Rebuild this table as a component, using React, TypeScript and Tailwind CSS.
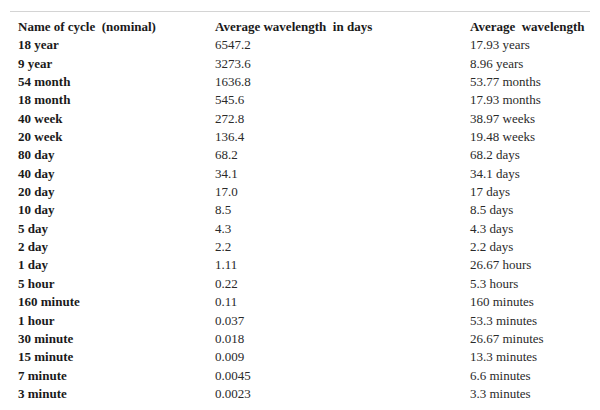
import React from 'react';

const rows: [string, string, string][] = [
  ['18 year', '6547.2', '17.93 years'],
  ['9 year', '3273.6', '8.96 years'],
  ['54 month', '1636.8', '53.77 months'],
  ['18 month', '545.6', '17.93 months'],
  ['40 week', '272.8', '38.97 weeks'],
  ['20 week', '136.4', '19.48 weeks'],
  ['80 day', '68.2', '68.2 days'],
  ['40 day', '34.1', '34.1 days'],
  ['20 day', '17.0', '17 days'],
  ['10 day', '8.5', '8.5 days'],
  ['5 day', '4.3', '4.3 days'],
  ['2 day', '2.2', '2.2 days'],
  ['1 day', '1.11', '26.67 hours'],
  ['5 hour', '0.22', '5.3 hours'],
  ['160 minute', '0.11', '160 minutes'],
  ['1 hour', '0.037', '53.3 minutes'],
  ['30 minute', '0.018', '26.67 minutes'],
  ['15 minute', '0.009', '13.3 minutes'],
  ['7 minute', '0.0045', '6.6 minutes'],
  ['3 minute', '0.0023', '3.3 minutes'],
];

export default function App() {
  return (
    <div className="w-[600px] h-[410px] bg-white overflow-hidden font-['Liberation_Serif',serif] text-[13px] text-[#2a2a2a]">
      <div className="pt-[11px] px-[10px]">
        <div className="border-t border-[#d4d4d4] pt-[6px] pl-[8px]">
          <div className="grid grid-cols-[197px_255px_1fr] leading-[18.35px] font-bold text-[#1a1a1a]">
            <div>Name of cycle&nbsp; (nominal)</div>
            <div>Average wavelength&nbsp; in days</div>
            <div>Average&nbsp; wavelength</div>
          </div>
          {rows.map((r) => (
            <div key={r[0]} className="grid grid-cols-[197px_255px_1fr] leading-[18.35px]">
              <div className="font-bold text-[#1a1a1a]">{r[0]}</div>
              <div>{r[1]}</div>
              <div>{r[2]}</div>
            </div>
          ))}
        </div>
      </div>
    </div>
  );
}
